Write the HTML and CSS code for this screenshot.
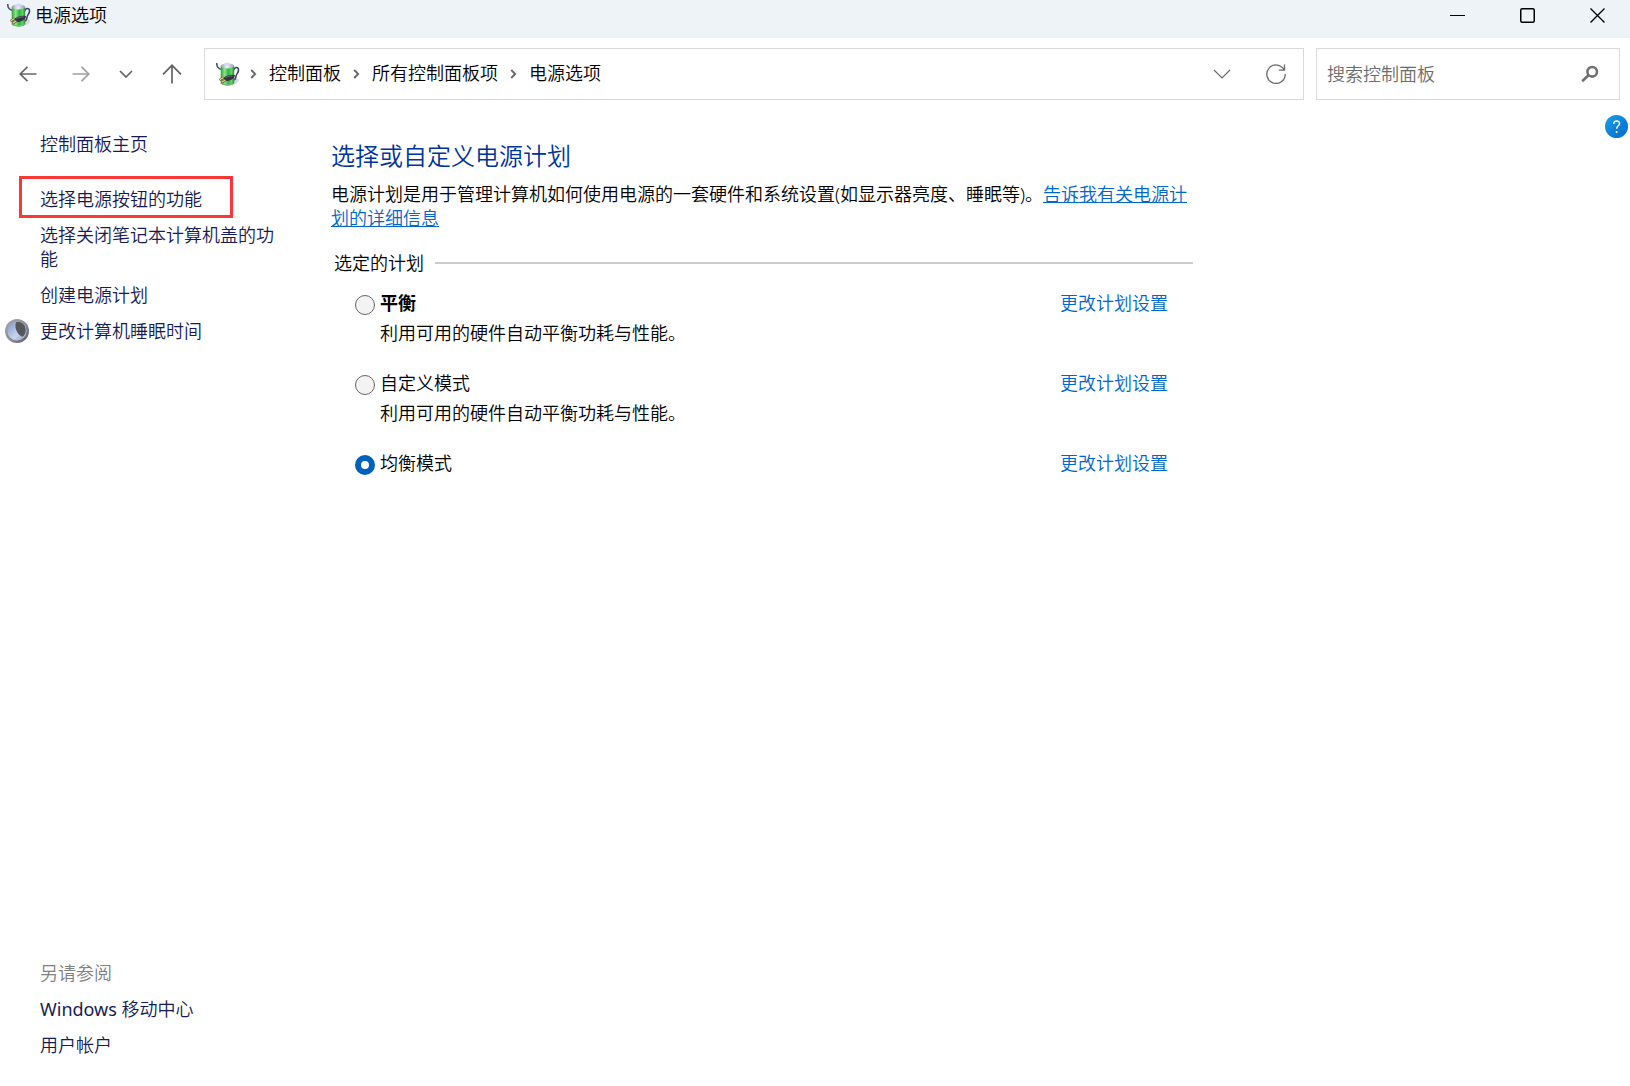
FILE: index.html
```html
<!DOCTYPE html>
<html lang="zh-CN">
<head>
<meta charset="utf-8">
<meta name="viewport" content="width=device-width, initial-scale=1">
<title>电源选项</title>
<link rel="stylesheet" href="styles.css">
</head>
<body>
<svg class="defs" aria-hidden="true">
  <defs>
    <linearGradient id="cell" x1="0" x2="1" y1="0" y2="0">
      <stop offset="0" stop-color="#2f9e3c"/>
      <stop offset=".3" stop-color="#8fe58a"/>
      <stop offset=".55" stop-color="#2fb344"/>
      <stop offset=".8" stop-color="#5ed35f"/>
      <stop offset="1" stop-color="#2a8d3a"/>
    </linearGradient>
    <linearGradient id="cap" x1="0" x2="1" y1="0" y2="0">
      <stop offset="0" stop-color="#8b93a0"/>
      <stop offset=".45" stop-color="#eef2f8"/>
      <stop offset="1" stop-color="#8f9aab"/>
    </linearGradient>
    <linearGradient id="moon-rim" x1="0" x2="1" y1="0" y2="1">
      <stop offset="0" stop-color="#a9adb3"/>
      <stop offset=".6" stop-color="#85888d"/>
      <stop offset="1" stop-color="#55585e"/>
    </linearGradient>
    <linearGradient id="moon-face" x1="0" x2="1" y1="0" y2="1">
      <stop offset="0" stop-color="#8199c8"/>
      <stop offset=".6" stop-color="#c5d3ee"/>
      <stop offset="1" stop-color="#8d9ab8"/>
    </linearGradient>
    <linearGradient id="help-blue" x1="0" x2="1" y1="0" y2="1">
      <stop offset="0" stop-color="#1c9fe4"/>
      <stop offset="1" stop-color="#0069cf"/>
    </linearGradient>
    <symbol id="battery" viewBox="0 0 24 24">
      <path d="M17 22.500c4-.5 6-2.500 6-5.500l-5-1z" fill="#c9cbc9" opacity=".7"/>
      <path d="M.8 1c-.3 3.500 1.200 5.500 4.600 6.600" fill="none" stroke="#50566f" stroke-width="1.600"/>
      <path d="M17.500 8.500c.5-3.500 4.800-4.300 5-.8.300 3.200-2.300 3.800-2.600 7-.2 2-1 3.300-3 3.600" fill="none" stroke="#3d4166" stroke-width="1.600"/>
      <path d="M4.700 4v17c0 1.300 3 2.500 6.800 2.500s6.700-1.200 6.700-2.500V4z" fill="url(#cell)"/>
      <path d="M4.700 21c0 1.300 3 2.500 6.800 2.500s6.700-1.200 6.700-2.500c-2 1.300-11.500 1.300-13.500 0z" fill="#77b887"/>
      <ellipse cx="11.450" cy="4" rx="6.750" ry="2.500" fill="url(#cap)"/>
      <ellipse cx="11.200" cy="2" rx="3" ry="1.500" fill="#cfdcf0"/>
      <path d="M7.500 15.700c3-2.300 7.500-3.500 11.500-2.500-.2 2.500-3.200 5-7 5.700-3 .4-5-1-4.500-3.200z" fill="#35333d"/>
      <path d="M9.500 15.500c2-1.200 4.500-1.800 7-1.500" stroke="#777683" stroke-width=".9" fill="none"/>
      <path d="M3.500 18l4-2.200M5.500 20.500l4-2.500" stroke="#6e5123" stroke-width="2.400"/>
      <path d="M3.700 17.700l3.600-1.900M5.700 20.200l3.600-2.200" stroke="#efd49a" stroke-width="1.200"/>
    </symbol>
    <symbol id="crumb-arrow" viewBox="0 0 7 12">
      <path d="M1.200 2l4 4-4 4" fill="none" stroke="#666" stroke-width="1.800"/>
    </symbol>
  </defs>
</svg>

<header class="titlebar">
  <svg class="app-icon"><use href="#battery"/></svg>
  <span class="window-title">电源选项</span>
  <div class="window-controls">
    <button type="button" aria-label="最小化"><svg width="15" height="15"><path d="M0 7.500h15" stroke="#000"/></svg></button>
    <button type="button" aria-label="最大化"><svg width="15" height="15"><rect x=".75" y=".75" width="13.500" height="13.500" rx="1.500" fill="none" stroke="#000" stroke-width="1.500"/></svg></button>
    <button type="button" aria-label="关闭"><svg width="15" height="15"><path d="M.5.5l14 14M14.500.5l-14 14" stroke="#000" stroke-width="1.400"/></svg></button>
  </div>
</header>

<nav class="toolbar" aria-label="导航">
  <div class="nav-buttons">
    <button class="step" type="button" aria-label="后退"><svg width="18" height="16"><path d="M17.500 8H1M8.500.8L1.200 8l7.300 7.200" fill="none" stroke="#646464" stroke-width="1.700"/></svg></button>
    <button class="step" type="button" aria-label="前进"><svg width="18" height="16"><path d="M.5 8H17M9.500.8L16.800 8l-7.300 7.200" fill="none" stroke="#a0a0a0" stroke-width="1.700"/></svg></button>
    <button class="recent" type="button" aria-label="最近浏览的位置"><svg width="14" height="8"><path d="M1 1l6 6 6-6" fill="none" stroke="#646464" stroke-width="1.700"/></svg></button>
    <button class="up" type="button" aria-label="上移"><svg width="20" height="20"><path d="M10 19.500V1.500M1 10.300l9-9 9 9" fill="none" stroke="#646464" stroke-width="1.700"/></svg></button>
  </div>
  <div class="address">
    <svg class="app-icon"><use href="#battery"/></svg>
    <ol class="crumbs">
      <li><svg class="crumb-arrow"><use href="#crumb-arrow"/></svg><a href="#">控制面板</a></li>
      <li><svg class="crumb-arrow"><use href="#crumb-arrow"/></svg><a href="#">所有控制面板项</a></li>
      <li><svg class="crumb-arrow"><use href="#crumb-arrow"/></svg><a href="#">电源选项</a></li>
    </ol>
    <button type="button" aria-label="以前的位置"><svg width="18" height="10"><path d="M1 1l8 8 8-8" fill="none" stroke="#6b6b6b" stroke-width="1.200"/></svg></button>
    <button type="button" aria-label="刷新"><svg width="20" height="20"><path d="M18.200 6A9.200 9.200 0 1 0 19.200 10M18.500.5v5.600h-5.600" fill="none" stroke="#6b6b6b" stroke-width="1.300"/></svg></button>
  </div>
  <form class="search">
    <input type="search" aria-label="搜索控制面板" placeholder="搜索控制面板">
    <button type="submit" aria-label="搜索"><svg width="18" height="18"><circle cx="11.200" cy="6.800" r="4.800" fill="none" stroke="#707070" stroke-width="2.600"/><path d="M7.500 10.300l-6.300 5.900" stroke="#707070" stroke-width="2.600"/></svg></button>
  </form>
</nav>

<div class="content">
  <aside class="sidebar">
    <a class="home" href="#">控制面板主页</a>
    <ul class="tasks">
      <li class="marked"><a href="#">选择电源按钮的功能</a></li>
      <li><a href="#">选择关闭笔记本计算机盖的功能</a></li>
      <li><a href="#">创建电源计划</a></li>
      <li class="with-icon">
        <svg class="moon" viewBox="0 0 24 24" aria-hidden="true">
          <circle cx="12" cy="12" r="12" fill="url(#moon-rim)"/>
          <circle cx="12" cy="12" r="9.600" fill="url(#moon-face)"/>
          <path d="M11 3.200c4.500-1 8.600 1.300 9.500 6 .8 4-.8 7.300-3.200 8.600C12.500 15.500 9 9 11 3.200z" fill="#55575d"/>
        </svg>
        <a href="#">更改计算机睡眠时间</a>
      </li>
    </ul>
    <section class="see-also">
      <h2>另请参阅</h2>
      <a href="#"><span class="latin">Windows </span>移动中心</a>
      <a href="#">用户帐户</a>
    </section>
  </aside>

  <main class="plans-page">
    <h1>选择或自定义电源计划</h1>
    <p class="intro">电源计划是用于管理计算机如何使用电源的一套硬件和系统设置(如显示器亮度、睡眠等)。<a href="#">告诉我有关电源计划的详细信息</a></p>
    <fieldset class="plans">
      <legend>选定的计划</legend>
      <div class="plan">
        <input type="radio" name="plan" id="plan-balanced">
        <label class="recommended" for="plan-balanced">平衡</label>
        <a href="#">更改计划设置</a>
        <p>利用可用的硬件自动平衡功耗与性能。</p>
      </div>
      <div class="plan">
        <input type="radio" name="plan" id="plan-custom">
        <label for="plan-custom">自定义模式</label>
        <a href="#">更改计划设置</a>
        <p>利用可用的硬件自动平衡功耗与性能。</p>
      </div>
      <div class="plan">
        <input type="radio" name="plan" id="plan-even" checked>
        <label for="plan-even">均衡模式</label>
        <a href="#">更改计划设置</a>
      </div>
    </fieldset>
  </main>

  <button class="help" type="button" aria-label="帮助">
    <svg width="23" height="23"><circle cx="11.500" cy="11.500" r="11.500" fill="url(#help-blue)"/><path d="M8.700 9c0-4 5.900-4 5.900-.4 0 2.200-3 2.300-3 5.200" fill="none" stroke="#fff" stroke-width="1.500"/><circle cx="11.600" cy="16.900" r="1" fill="#fff"/></svg>
  </button>
</div>
</body>
</html>
```
FILE: styles.css
```css
* {
  box-sizing: border-box;
}

body {
  display: flex;
  flex-direction: column;
  min-height: 100vh;
  margin: 0;
  background: #fff;
  color: #000;
  font-family: "Noto Sans", "Noto Sans CJK SC", sans-serif;
  font-size: 18px;
  font-weight: 350;
  line-height: 24px;
}

a {
  color: inherit;
  text-decoration: none;
}

button {
  display: flex;
  align-items: center;
  justify-content: center;
  padding: 0;
  border: 0;
  background: transparent;
}

h1,
h2,
p,
ul,
ol {
  margin: 0;
  padding: 0;
  list-style: none;
}

svg {
  display: block;
  flex: none;
}

.defs {
  position: absolute;
  width: 0;
  height: 0;
}

.app-icon {
  width: 24px;
  height: 24px;
}

.latin {
  font-weight: 400;
}

/* Title bar */

.titlebar {
  display: flex;
  align-items: center;
  height: 38px;
  padding: 0 0 8px 7px;
  background: #eef3f8;
}

.window-title {
  padding-left: 4px;
}

.window-controls {
  display: flex;
  gap: 4px;
  margin-left: auto;
}

.window-controls button {
  width: 66px;
  height: 31px;
}

/* Toolbar */

.toolbar {
  display: flex;
  padding: 10px 10px 10px 1px;
}

.nav-buttons {
  display: flex;
  margin-right: 4px;
}

.step {
  width: 53px;
}

.recent {
  width: 37px;
}

.up {
  width: 56px;
}

.address,
.search {
  display: flex;
  height: 52px;
  border: 1px solid #d9d9d9;
}

.address {
  flex: 1;
  align-items: center;
  padding-left: 11px;
}

.address button {
  width: 54px;
  height: 50px;
}

.crumbs {
  display: flex;
  flex: 1;
  padding-bottom: 2px;
}

.crumbs li {
  display: flex;
  align-items: center;
}

.crumb-arrow {
  width: 7px;
  height: 12px;
  margin: 2px 12px 0;
}

.crumbs li:first-child .crumb-arrow {
  margin-left: 10px;
}

.search {
  width: 304px;
  margin-left: 12px;
}

.search input {
  flex: 1;
  min-width: 0;
  padding: 0 0 0 10px;
  border: 0;
  outline: 0;
  background: transparent;
  color: #000;
  font: inherit;
}

.search input::placeholder {
  color: #6d6d6d;
}

.search button {
  width: 58px;
}

/* Content */

.content {
  display: flex;
  flex: 1;
}

.sidebar {
  display: flex;
  flex: none;
  flex-direction: column;
  width: 331px;
  padding: 22px 51px 29px 40px;
  color: #151c55;
}

.tasks {
  display: flex;
  flex-direction: column;
  gap: 12px;
  margin-top: 31px;
}

.marked,
.with-icon {
  position: relative;
}

.marked::after {
  content: "";
  position: absolute;
  inset: -11px 47px -7px -21px;
  border: 3px solid #fb3838;
  pointer-events: none;
}

.moon {
  position: absolute;
  top: 0;
  left: -35px;
  width: 24px;
  height: 24px;
}

.see-also {
  display: flex;
  flex-direction: column;
  gap: 12px;
  margin-top: auto;
}

.see-also h2 {
  color: #808080;
  font-size: 18px;
  font-weight: 350;
}

.plans-page {
  flex: 1;
  max-width: 862px;
  padding-top: 30px;
}

.plans-page h1 {
  margin-bottom: 10px;
  color: #003399;
  font-size: 24px;
  font-weight: 350;
  line-height: 32px;
}

.plans-page a {
  color: #0066cc;
}

.intro a {
  text-decoration: underline;
}

.plans {
  display: flex;
  flex-direction: column;
  gap: 26px;
  min-width: 0;
  margin: 21px 0 0;
  padding: 16px 0 0;
  border: 0;
}

.plans legend {
  display: flex;
  align-items: center;
  gap: 11px;
  width: 100%;
  padding: 0 0 0 3px;
}

.plans legend::after {
  content: "";
  flex: 1;
  height: 2px;
  background: #ccc;
}

.plan {
  display: grid;
  grid-template-columns: 20px 1fr auto;
  gap: 6px 5px;
  padding: 0 25px 0 24px;
}

.plan p {
  grid-column: 2 / 4;
}

.plan input {
  width: 20px;
  height: 20px;
  margin: 4px 0 0;
  border: 1px solid #666;
  border-radius: 50%;
  background: #f3f3f3;
  appearance: none;
}

.plan input:checked {
  border: 6px solid #005fb8;
  background: #fff;
}

.plan .recommended {
  font-weight: 700;
}

.help {
  align-self: flex-start;
  margin: 5px 2px 0 auto;
}
```
